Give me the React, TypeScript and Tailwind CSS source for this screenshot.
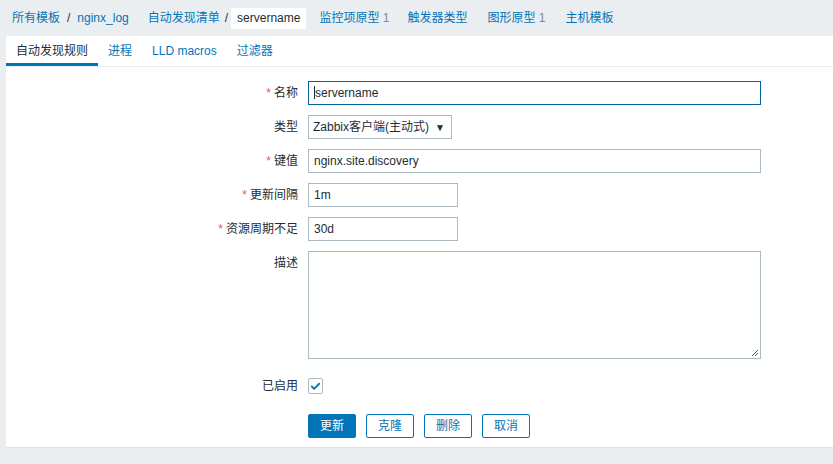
import { Check } from 'lucide-react'

const font = 'font-["Liberation_Sans","Noto_Sans_CJK_SC",Arial,sans-serif]'

const crumbs = [
  { label: '所有模板', sep: true },
  { label: 'nginx_log' },
]

const tabs = ['自动发现规则', '进程', 'LLD macros', '过滤器']

function Label({ text, required }: { text: string; required?: boolean }) {
  return (
    <div className="w-[302px] pr-[10px] text-right leading-[24px] text-[#1f2c33]">
      {required && <span className="mr-[3px] text-[#e45959]">*</span>}
      {text}
    </div>
  )
}

function Input({ value, w, focus }: { value: string; w: string; focus?: boolean }) {
  return (
    <div
      className={`h-[24px] ${w} border ${
        focus ? 'border-[#00639a]' : 'border-[#acbbc2]'
      } bg-white px-[5px] leading-[22px] text-[#1f2c33]`}
    >
      {focus && <span className="inline-block h-[13px] w-px translate-y-[2px] bg-[#1f2c33]" />}
      {value}
    </div>
  )
}

export default function App() {
  return (
    <div className={`${font} min-h-[464px] w-[833px] bg-[#ebeef0] text-[12px]`}>
      {/* Breadcrumbs / header nav */}
      <div className="flex h-[36px] items-center pl-[12px] text-[#0275b8]">
        {crumbs.map((c) => (
          <span key={c.label} className="flex items-center">
            {c.label}
            {c.sep && <span className="px-[7px] text-[#1f2c33]">/</span>}
          </span>
        ))}
        <span className="ml-[19px]">自动发现清单</span>
        <span className="pl-[5px] pr-[3px] text-[#1f2c33]">/</span>
        <span className="flex h-[21px] items-center bg-white px-[6px] text-[#1f2c33]">servername</span>
        <span className="ml-[13px]">
          监控项原型 <span className="text-[#768d99]">1</span>
        </span>
        <span className="ml-[18px]">触发器类型</span>
        <span className="ml-[20px]">
          图形原型 <span className="text-[#768d99]">1</span>
        </span>
        <span className="ml-[20px]">主机模板</span>
      </div>

      {/* Panel */}
      <div className="ml-[6px] border-b border-[#dfe4e7] bg-white pb-[9px]">
        <div className="flex h-[31px] border-b border-[#ebeef0]">
          {tabs.map((t, i) => (
            <div
              key={t}
              className={`flex items-center px-[10px] ${
                i === 0
                  ? 'border-b-[3px] border-[#0275b8] pt-[3px] text-[#1f2c33]'
                  : 'text-[#0275b8]'
              }`}
            >
              {t}
            </div>
          ))}
        </div>

        <div className="flex flex-col gap-[10px] pt-[14px]">
          <div className="flex">
            <Label text="名称" required />
            <Input value="servername" w="w-[453px]" focus />
          </div>
          <div className="flex">
            <Label text="类型" />
            <div className="flex h-[24px] w-[144px] items-center justify-between border border-[#acbbc2] bg-white pl-[4px] pr-[6px] text-[#1f2c33]">
              <span>Zabbix客户端(主动式)</span>
              <span className="text-[10px]">▼</span>
            </div>
          </div>
          <div className="flex">
            <Label text="键值" required />
            <Input value="nginx.site.discovery" w="w-[453px]" />
          </div>
          <div className="flex">
            <Label text="更新间隔" required />
            <Input value="1m" w="w-[150px]" />
          </div>
          <div className="flex">
            <Label text="资源周期不足" required />
            <Input value="30d" w="w-[150px]" />
          </div>
          <div className="flex">
            <Label text="描述" />
            <div className="relative h-[108px] w-[453px] border border-[#acbbc2] bg-white">
              <svg className="absolute bottom-[1px] right-[1px]" width="8" height="8" viewBox="0 0 8 8">
                <path d="M7 1L1 7M7 4L4 7" stroke="#555" strokeWidth="1" />
              </svg>
            </div>
          </div>
          <div className="mt-[5px] flex items-center">
            <Label text="已启用" />
            <div className="flex h-[16px] w-[15px] items-center justify-center rounded-[2px] border border-[#acbbc2] bg-white">
              <Check size={11} strokeWidth={4} className="text-[#0275b8]" />
            </div>
          </div>
          <div className="mt-[6px] flex gap-[10px] pl-[302px]">
            <button className="h-[24px] w-[48px] rounded-[2px] border border-[#0275b8] bg-[#0275b8] text-white">
              更新
            </button>
            {['克隆', '删除', '取消'].map((b) => (
              <button
                key={b}
                className="h-[24px] w-[48px] rounded-[2px] border border-[#0275b8] bg-white text-[#0275b8]"
              >
                {b}
              </button>
            ))}
          </div>
        </div>
      </div>
    </div>
  )
}
